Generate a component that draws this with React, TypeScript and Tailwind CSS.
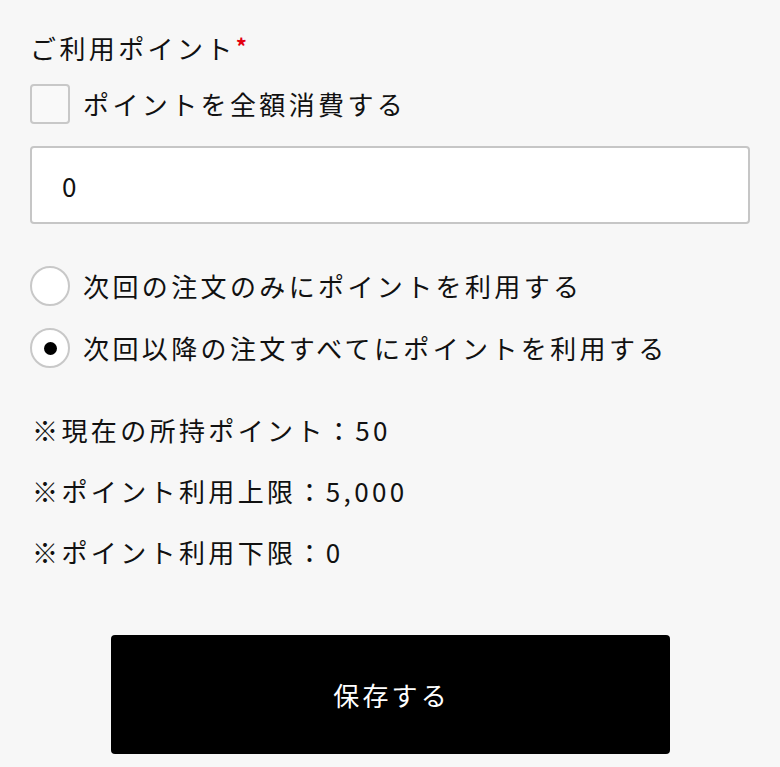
import { useState } from "react";

const font = "font-['Noto_Sans_CJK_JP','Noto_Sans',sans-serif]";

const limits = [
  "※現在の所持ポイント：50",
  "※ポイント利用上限：5,000",
  "※ポイント利用下限：0",
];

const options = [
  { id: "once", label: "次回の注文のみにポイントを利用する" },
  { id: "always", label: "次回以降の注文すべてにポイントを利用する" },
];

export default function App() {
  const [useAll, setUseAll] = useState(false);
  const [points, setPoints] = useState("0");
  const [mode, setMode] = useState("always");

  return (
    <div
      className={`min-h-[767px] w-full bg-[#f7f7f7] px-[30px] pt-[28px] text-[26px] tracking-[0.13em] text-[#111] ${font}`}
    >
      <div className="flex h-[40px] items-center">
        <span className="leading-none">ご利用ポイント</span>
        <span className="self-start pt-[6px] text-[22px] font-bold leading-none tracking-normal text-[#e3000f]">
          *
        </span>
      </div>

      <label className="mt-[16px] flex h-[40px] cursor-pointer items-center gap-[13px]">
        <span className="grid h-[40px] w-[40px] shrink-0 place-items-center rounded-[4px] border-2 border-[#c8c8c8] bg-[#f9f9f9]">
          {useAll && <span className="h-[14px] w-[14px] bg-black" />}
        </span>
        <input
          type="checkbox"
          className="hidden"
          checked={useAll}
          onChange={(e) => setUseAll(e.target.checked)}
        />
        <span className="leading-none">ポイントを全額消費する</span>
      </label>

      <input
        value={points}
        onChange={(e) => setPoints(e.target.value)}
        className={`mt-[22px] block h-[78px] w-full rounded-[4px] border-2 border-[#c6c6c6] bg-white px-[30px] text-[26px] tracking-normal text-[#111] outline-none ${font}`}
      />

      <div className="mt-[42px] flex flex-col gap-[22px]">
        {options.map((option) => (
          <label key={option.id} className="flex h-[40px] cursor-pointer items-center gap-[13px]">
            <span className="grid h-[40px] w-[40px] shrink-0 place-items-center rounded-full border-2 border-[#c8c8c8] bg-white">
              {mode === option.id && <span className="h-[13px] w-[13px] rounded-full bg-black" />}
            </span>
            <input
              type="radio"
              name="mode"
              className="hidden"
              checked={mode === option.id}
              onChange={() => setMode(option.id)}
            />
            <span className="leading-none">{option.label}</span>
          </label>
        ))}
      </div>

      <div className="mt-[42px] flex flex-col gap-[21px]">
        {limits.map((line) => (
          <div key={line} className="flex h-[40px] items-center pl-[2px] leading-none">
            {line}
          </div>
        ))}
      </div>

      <div className="mt-[63px] flex justify-center">
        <button
          type="button"
          className={`h-[119px] w-[559px] rounded-[4px] bg-black pl-[0.12em] text-[26px] tracking-[0.12em] text-white ${font}`}
        >
          保存する
        </button>
      </div>
    </div>
  );
}
